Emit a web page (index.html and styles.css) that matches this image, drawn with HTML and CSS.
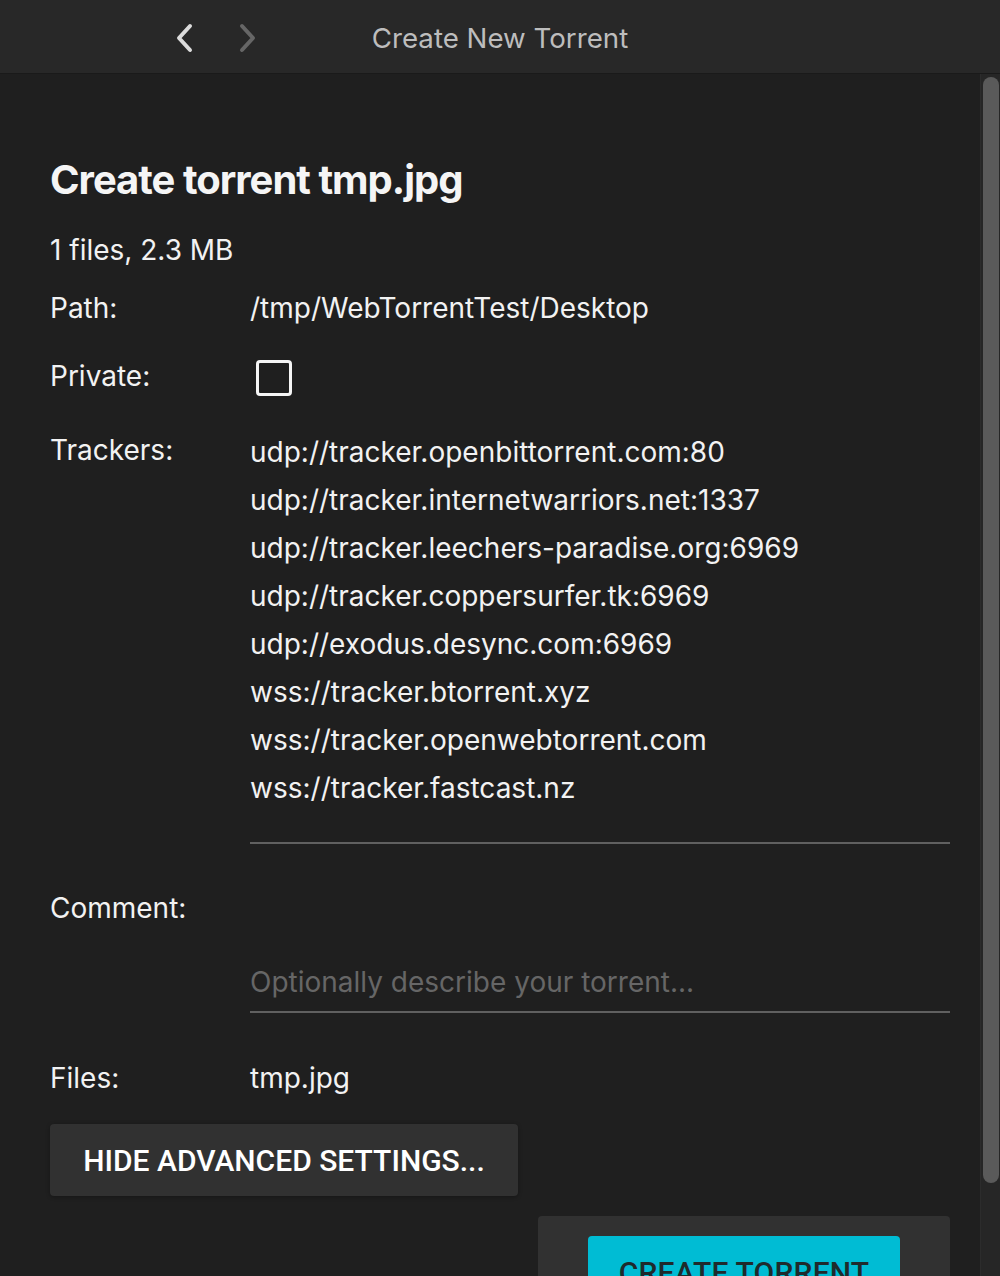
FILE: index.html
```html
<!DOCTYPE html>
<html>
<head>
<meta charset="utf-8">
<link rel="stylesheet" href="styles.css">
</head>
<body>
<header class="titlebar">
  <div class="nav">
    <svg class="chev back" width="24" height="32" viewBox="0 0 24 32"><path d="M17 4 L6 16 L17 28" fill="none" stroke="currentColor" stroke-width="4" stroke-linecap="round" stroke-linejoin="round"/></svg>
    <svg class="chev fwd" width="24" height="32" viewBox="0 0 24 32"><path d="M7 4 L18 16 L7 28" fill="none" stroke="currentColor" stroke-width="4" stroke-linecap="round" stroke-linejoin="round"/></svg>
  </div>
  <div class="wintitle">Create New Torrent</div>
</header>
<div class="main">
  <div class="content">
    <h1 class="heading">Create torrent tmp.jpg</h1>
    <div class="meta">1 files, 2.3 MB</div>
    <div class="row row-path">
      <div class="label">Path:</div>
      <div class="value">/tmp/WebTorrentTest/Desktop</div>
    </div>
    <div class="row row-private">
      <div class="label">Private:</div>
      <div class="value"><span class="checkbox"></span></div>
    </div>
    <div class="row row-trackers">
      <div class="label label-trackers">Trackers:</div>
      <div class="value field trackers">
        <div>udp://tracker.openbittorrent.com:80</div>
        <div>udp://tracker.internetwarriors.net:1337</div>
        <div>udp://tracker.leechers-paradise.org:6969</div>
        <div>udp://tracker.coppersurfer.tk:6969</div>
        <div>udp://exodus.desync.com:6969</div>
        <div>wss://tracker.btorrent.xyz</div>
        <div>wss://tracker.openwebtorrent.com</div>
        <div>wss://tracker.fastcast.nz</div>
      </div>
    </div>
    <div class="row row-comment">
      <div class="label">Comment:</div>
      <div class="value field comment"><span class="placeholder">Optionally describe your torrent...</span></div>
    </div>
    <div class="row row-files">
      <div class="label">Files:</div>
      <div class="value">tmp.jpg</div>
    </div>
    <button class="btn-adv">HIDE ADVANCED SETTINGS...</button>
    <div class="footer">
      <div class="footer-box">
        <button class="btn-create">CREATE TORRENT</button>
      </div>
    </div>
  </div>
  <div class="scrollbar"><div class="thumb"></div></div>
</div>
</body>
</html>
```
FILE: styles.css
```css
* { box-sizing: border-box; }
html, body {
  margin: 0;
  padding: 0;
  background: #1f1f1f;
  width: 1000px;
  height: 1276px;
  overflow: hidden;
  font-family: "Inter", "Noto Sans", sans-serif;
  color: #f2f2f2;
}
.titlebar {
  height: 74px;
  background: #282828;
  border-bottom: 1px solid #1a1a1a;
  display: flex;
  align-items: center;
  position: relative;
}
.nav {
  display: flex;
  gap: 38px;
  padding-left: 173px;
  padding-top: 2px;
}
.chev { display: block; }
.chev.back { color: #dcdcdc; }
.chev.fwd { color: #666666; }
.wintitle {
  position: absolute;
  left: 0;
  right: 0;
  top: 0;
  line-height: 76px;
  text-align: center;
  font-size: 27.7px;
  color: #bdbdbd;
  pointer-events: none;
}
.main {
  display: flex;
  height: 1202px;
  overflow: hidden;
}
.content {
  flex: 1;
  padding: 82px 30px 0 50px;
}
.scrollbar {
  width: 20px;
  background: #262626;
  padding: 3px 2px 0 2px;
  border-left: 1px solid #2c2c2c;
}
.thumb {
  width: 16px;
  height: 1106px;
  background: #5a5a5a;
  border-radius: 8px;
}
.heading {
  margin: 0;
  font-size: 40px;
  line-height: 48px;
  font-weight: 700;
  letter-spacing: -1px;
  color: #f5f5f5;
}
.meta {
  margin-top: 22px;
  font-size: 28px;
  line-height: 48px;
}
.row {
  display: flex;
  font-size: 28px;
  line-height: 48px;
}
.label {
  width: 200px;
  flex: none;
}
.value { flex: 1; }
.row-path { margin-top: 10px; }
.row-private { margin-top: 20px; }
.checkbox {
  display: block;
  width: 36px;
  height: 36px;
  margin: 8px 0 0 6px;
  border: 3px solid #f5f5f5;
  border-radius: 4px;
}
.row-trackers { margin-top: 28px; }
.label-trackers { margin-top: -2px; }
.field { border-bottom: 2px solid #606060; }
.trackers { padding-bottom: 30px; }
.row-comment { margin-top: 40px; }
.comment {
  padding-top: 74px;
  padding-bottom: 5px;
}
.placeholder { color: #666666; }
.row-files { margin-top: 41px; }
.btn-adv {
  display: block;
  margin-top: 22px;
  width: 468px;
  height: 72px;
  border: none;
  border-radius: 4px;
  background: #313131;
  color: #ffffff;
  font-family: "Roboto", "Inter", sans-serif;
  font-weight: 500;
  font-size: 30px;
  letter-spacing: 0;
  padding: 0;
  box-shadow: 0 1px 4px rgba(0,0,0,0.3);
}
.footer {
  display: flex;
  justify-content: flex-end;
  margin-top: 20px;
}
.footer-box {
  width: 412px;
  background: #313131;
  border-radius: 4px;
  padding: 20px 50px 30px;
}
.btn-create {
  display: block;
  width: 312px;
  height: 72px;
  border: none;
  border-radius: 4px;
  background: #00bcd4;
  color: #1f2a2c;
  font-family: "Roboto", "Inter", sans-serif;
  font-weight: 500;
  font-size: 30px;
  letter-spacing: 0.2px;
  padding: 0;
}
```
